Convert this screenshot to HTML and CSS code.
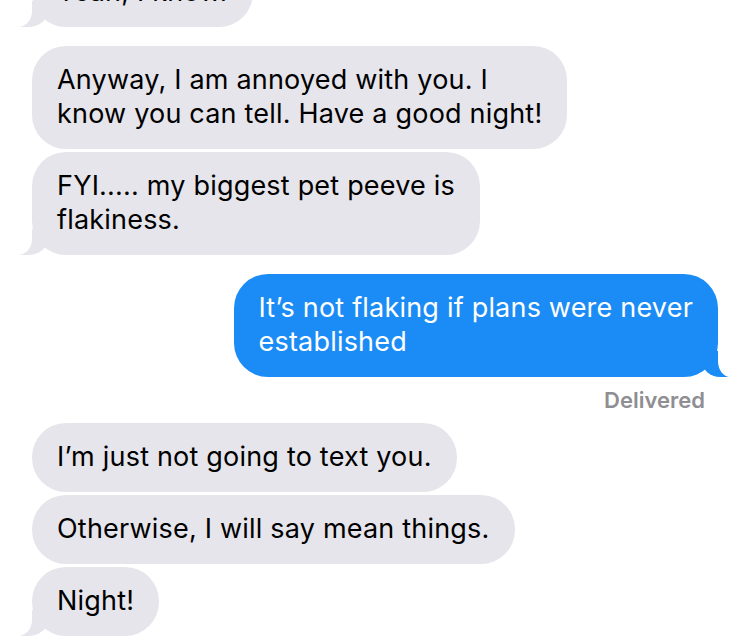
FILE: index.html
```html
<!DOCTYPE html>
<html lang="en">
<head>
    <meta charset="UTF-8">
    <meta name="viewport" content="width=device-width, initial-scale=1.0">
    <title>Messages</title>
    <link rel="stylesheet" href="styles.css">
</head>
<body>
    <div class="thread">
        <div class="group">
            <div class="bubble received tail">Yeah, I know.</div>
        </div>
        <div class="group">
            <div class="bubble received">Anyway, I am annoyed with you. I<br>know you can tell. Have a good night!</div>
            <div class="bubble received tail">FYI..... my biggest pet peeve is<br>flakiness.</div>
        </div>
        <div class="group sent-group">
            <div class="bubble sent tail">It’s not flaking if plans were never<br>established</div>
            <div class="status">Delivered</div>
        </div>
        <div class="group">
            <div class="bubble received">I’m just not going to text you.</div>
            <div class="bubble received">Otherwise, I will say mean things.</div>
            <div class="bubble received tail">Night!</div>
        </div>
    </div>
</body>
</html>
```

FILE: styles.css
```css
body {
    margin: 0;
    background-color: #ffffff;
    font-family: Inter, "Noto Sans", Arial, sans-serif;
    overflow: hidden;
}

.thread {
    display: flex;
    flex-direction: column;
    gap: 19px;
    padding: 0 32px;
    margin-top: -42px;
}

.group {
    display: flex;
    flex-direction: column;
    align-items: flex-start;
    gap: 3px;
}
.sent-group {
    align-items: flex-end;
    gap: 11px;
}

.bubble {
    position: relative;
    padding: 17px 25px 18px;
    border-radius: 34px;
    font-size: 27px;
    line-height: 34px;
    letter-spacing: 0.2px;
}
.received {
    background-color: #e6e5eb;
    color: #000000;
}
.sent {
    background-color: #1b8cf5;
    color: #ffffff;
}

/* little tails under the last bubble of a group */
.tail::before,
.tail::after {
    content: "";
    position: absolute;
    bottom: 0;
    height: 26px;
}
.received.tail::before {
    left: -14px;
    width: 30px;
    background-color: #e6e5eb;
    border-bottom-right-radius: 20px 16px;
}
.received.tail::after {
    left: -22px;
    width: 22px;
    background-color: #ffffff;
    border-bottom-right-radius: 14px 16px;
}
.sent.tail::before {
    right: -10px;
    width: 26px;
    background-color: #1b8cf5;
    border-bottom-left-radius: 18px 16px;
}
.sent.tail::after {
    right: -18px;
    width: 18px;
    background-color: #ffffff;
    border-bottom-left-radius: 12px 16px;
}

.status {
    margin-right: 13px;
    margin-bottom: -8px;
    font-size: 22px;
    line-height: 24px;
    font-weight: 600;
    color: #8e8e93;
}
```
